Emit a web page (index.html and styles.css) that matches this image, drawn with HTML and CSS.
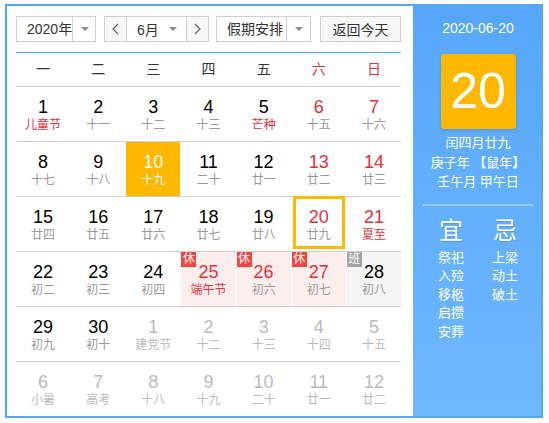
FILE: index.html
```html
<!DOCTYPE html>
<html lang="zh-CN">
<head>
<meta charset="utf-8">
<title>万年历</title>
<link rel="stylesheet" href="styles.css">
</head>
<body>
<div class="calendar">
  <div class="main">
    <div class="toolbar">
      <div class="select year"><span class="label">2020年</span><span class="caret-box"><i class="caret"></i></span></div>
      <div class="month-group">
        <button class="nav prev"><svg width="7" height="12" viewBox="0 0 7 12"><polyline points="6,1 1,6 6,11" fill="none" stroke="#666" stroke-width="1.2"/></svg></button>
        <div class="month"><span class="mlabel">6月</span><i class="caret"></i></div>
        <button class="nav next"><svg width="7" height="12" viewBox="0 0 7 12"><polyline points="1,1 6,6 1,11" fill="none" stroke="#666" stroke-width="1.2"/></svg></button>
      </div>
      <div class="select holiday"><span class="label">假期安排</span><span class="caret-box"><i class="caret"></i></span></div>
      <button class="today-btn">返回今天</button>
    </div>
    <div class="weekdays">
      <span>一</span><span>二</span><span>三</span><span>四</span><span>五</span><span class="wk">六</span><span class="wk">日</span>
    </div>
    <div class="weeks">
      <div class="week">
        <div class="day"><span class="num">1</span><span class="lunar fest">儿童节</span></div>
        <div class="day"><span class="num">2</span><span class="lunar">十一</span></div>
        <div class="day"><span class="num">3</span><span class="lunar">十二</span></div>
        <div class="day"><span class="num">4</span><span class="lunar">十三</span></div>
        <div class="day"><span class="num">5</span><span class="lunar fest">芒种</span></div>
        <div class="day weekend"><span class="num">6</span><span class="lunar">十五</span></div>
        <div class="day weekend"><span class="num">7</span><span class="lunar">十六</span></div>
      </div>
      <div class="week">
        <div class="day"><span class="num">8</span><span class="lunar">十七</span></div>
        <div class="day"><span class="num">9</span><span class="lunar">十八</span></div>
        <div class="day selected"><span class="num">10</span><span class="lunar">十九</span></div>
        <div class="day"><span class="num">11</span><span class="lunar">二十</span></div>
        <div class="day"><span class="num">12</span><span class="lunar">廿一</span></div>
        <div class="day weekend"><span class="num">13</span><span class="lunar">廿二</span></div>
        <div class="day weekend"><span class="num">14</span><span class="lunar">廿三</span></div>
      </div>
      <div class="week">
        <div class="day"><span class="num">15</span><span class="lunar">廿四</span></div>
        <div class="day"><span class="num">16</span><span class="lunar">廿五</span></div>
        <div class="day"><span class="num">17</span><span class="lunar">廿六</span></div>
        <div class="day"><span class="num">18</span><span class="lunar">廿七</span></div>
        <div class="day"><span class="num">19</span><span class="lunar">廿八</span></div>
        <div class="day weekend today"><span class="num">20</span><span class="lunar">廿九</span></div>
        <div class="day weekend"><span class="num">21</span><span class="lunar fest">夏至</span></div>
      </div>
      <div class="week">
        <div class="day"><span class="num">22</span><span class="lunar">初二</span></div>
        <div class="day"><span class="num">23</span><span class="lunar">初三</span></div>
        <div class="day"><span class="num">24</span><span class="lunar">初四</span></div>
        <div class="day rest weekend"><span class="badge">休</span><span class="num">25</span><span class="lunar fest">端午节</span></div>
        <div class="day rest weekend"><span class="badge">休</span><span class="num">26</span><span class="lunar">初六</span></div>
        <div class="day rest weekend"><span class="badge">休</span><span class="num">27</span><span class="lunar">初七</span></div>
        <div class="day work"><span class="badge">班</span><span class="num">28</span><span class="lunar">初八</span></div>
      </div>
      <div class="week">
        <div class="day"><span class="num">29</span><span class="lunar">初九</span></div>
        <div class="day"><span class="num">30</span><span class="lunar">初十</span></div>
        <div class="day other"><span class="num">1</span><span class="lunar">建党节</span></div>
        <div class="day other"><span class="num">2</span><span class="lunar">十二</span></div>
        <div class="day other"><span class="num">3</span><span class="lunar">十三</span></div>
        <div class="day other"><span class="num">4</span><span class="lunar">十四</span></div>
        <div class="day other"><span class="num">5</span><span class="lunar">十五</span></div>
      </div>
      <div class="week">
        <div class="day other"><span class="num">6</span><span class="lunar">小暑</span></div>
        <div class="day other"><span class="num">7</span><span class="lunar">高考</span></div>
        <div class="day other"><span class="num">8</span><span class="lunar">十八</span></div>
        <div class="day other"><span class="num">9</span><span class="lunar">十九</span></div>
        <div class="day other"><span class="num">10</span><span class="lunar">二十</span></div>
        <div class="day other"><span class="num">11</span><span class="lunar">廿一</span></div>
        <div class="day other"><span class="num">12</span><span class="lunar">廿二</span></div>
      </div>
    </div>
  </div>
  <aside class="panel">
    <div class="date">2020-06-20</div>
    <div class="big">20</div>
    <div class="lunar-info">
      <div>闰四月廿九</div>
      <div>庚子年 【鼠年】</div>
      <div>壬午月 甲午日</div>
    </div>
    <div class="divider"></div>
    <div class="yiji">
      <div class="col">
        <div class="col-title">宜</div>
        <div class="col-list"><div>祭祀</div><div>入殓</div><div>移柩</div><div>启攒</div><div>安葬</div></div>
      </div>
      <div class="col">
        <div class="col-title">忌</div>
        <div class="col-list"><div>上梁</div><div>动土</div><div>破土</div></div>
      </div>
    </div>
  </aside>
</div>
</body>
</html>
```
FILE: styles.css
```css
body {
  margin: 0;
  background: #fff;
  font-family: "Liberation Sans", "Noto Sans CJK SC", sans-serif;
}

.calendar {
  display: flex;
  width: 538px;
  margin: 4px 0 0 5px;
  border: 2px solid #55a6f6;
  box-sizing: border-box;
}

.main {
  width: 406px;
  padding: 10px 12px 0 9px;
  box-sizing: border-box;
}

.toolbar {
  display: flex;
  height: 26px;
  padding-bottom: 10px;
  border-bottom: 1px solid #5aa9f8;
}

.select {
  display: flex;
  height: 26px;
  box-sizing: border-box;
  border: 1px solid #cfcfcf;
  background: #fff;
}

.year {
  width: 80px;
  margin-right: 8px;
}

.holiday {
  width: 95px;
  margin-right: 9px;
}

.label {
  flex: 1;
  padding-left: 10px;
  font-size: 14px;
  line-height: 24px;
  color: #333;
  white-space: nowrap;
}

.caret-box {
  flex: none;
  width: 23px;
  border-left: 1px solid #cfcfcf;
  display: flex;
  align-items: center;
  justify-content: center;
}

.caret {
  width: 0;
  height: 0;
  border-left: 4px solid transparent;
  border-right: 4px solid transparent;
  border-top: 4px solid #8a8a8a;
}

.month-group {
  display: flex;
  width: 105px;
  height: 26px;
  margin-right: 7px;
  box-sizing: border-box;
  border: 1px solid #cfcfcf;
}

.nav {
  width: 22px;
  padding: 0;
  border: 0;
  background: #f7f7f7;
  display: flex;
  align-items: center;
  justify-content: center;
}

.prev {
  border-right: 1px solid #cfcfcf;
}

.next {
  border-left: 1px solid #cfcfcf;
}

.month {
  flex: 1;
  display: flex;
  align-items: center;
  padding: 0 9px 0 10px;
  background: #fff;
}

.mlabel {
  flex: 1;
  font-size: 14px;
  color: #333;
}

.today-btn {
  width: 81px;
  height: 26px;
  padding: 0;
  border: 1px solid #cfcfcf;
  background: #f7f7f7;
  font-family: inherit;
  font-size: 14px;
  color: #333;
}

.weekdays {
  display: grid;
  grid-template-columns: repeat(7, 1fr);
  column-gap: 1px;
  height: 33px;
  line-height: 33px;
  font-size: 14px;
  color: #333;
  text-align: center;
  border-bottom: 1px solid #d0d0d0;
}

.weekdays .wk {
  color: #e5303a;
}

.week {
  display: grid;
  grid-template-columns: repeat(7, 1fr);
  column-gap: 1px;
  height: 54px;
  border-bottom: 1px solid #d0d0d0;
}

.week:last-child {
  border-bottom: 0;
}

.day {
  position: relative;
  display: flex;
  flex-direction: column;
  align-items: center;
  padding-top: 10px;
  box-sizing: border-box;
}

.num {
  font-size: 18px;
  line-height: 20px;
  color: #000;
}

.lunar {
  font-size: 12px;
  line-height: 17px;
  color: #999;
}

.weekend .num {
  color: #e5303a;
}

.lunar.fest {
  color: #e5303a;
}

.other .num,
.other .lunar {
  color: #bbb;
}

.selected {
  background: #ffb800;
}

.selected .num,
.selected .lunar {
  color: #fff;
}

.today {
  border: 3px solid #ffb800;
  margin: -1px 1px 2px 1px;
  padding-top: 8px;
}

.rest {
  background: #fdeeee;
}

.work {
  background: #f4f4f4;
}

.badge {
  position: absolute;
  left: 0;
  top: 0;
  width: 15px;
  height: 15px;
  background: #f2473f;
  color: #fff;
  font-size: 12px;
  line-height: 15px;
  text-align: center;
}

.work .badge {
  background: #a3a3a3;
}

.panel {
  width: 128px;
  box-sizing: border-box;
  padding: 12px 0 0 2px;
  background: linear-gradient(#56a7fb, #70b8ff);
  color: #fff;
  display: flex;
  flex-direction: column;
  align-items: center;
}

.date {
  font-size: 14px;
  line-height: 20px;
}

.big {
  width: 75px;
  height: 75px;
  margin-top: 16px;
  background: #ffb800;
  border-radius: 3px;
  box-shadow: 0 1px 3px rgba(0, 0, 0, 0.15);
  font-size: 50px;
  line-height: 75px;
  text-align: center;
}

.lunar-info {
  margin-top: 4px;
  font-size: 13px;
  line-height: 19.5px;
  text-align: center;
}

.divider {
  width: 110px;
  height: 2px;
  margin-top: 12px;
  background: rgba(255, 255, 255, 0.35);
}

.yiji {
  display: flex;
  margin-top: 10px;
}

.col {
  width: 54px;
  display: flex;
  flex-direction: column;
  align-items: center;
}

.col-title {
  font-size: 24px;
  line-height: 30px;
  text-shadow: 1px 1px 1px rgba(0, 0, 0, 0.15);
}

.col-list {
  margin-top: 3px;
  font-size: 13px;
  line-height: 18.5px;
  text-align: center;
}
```
